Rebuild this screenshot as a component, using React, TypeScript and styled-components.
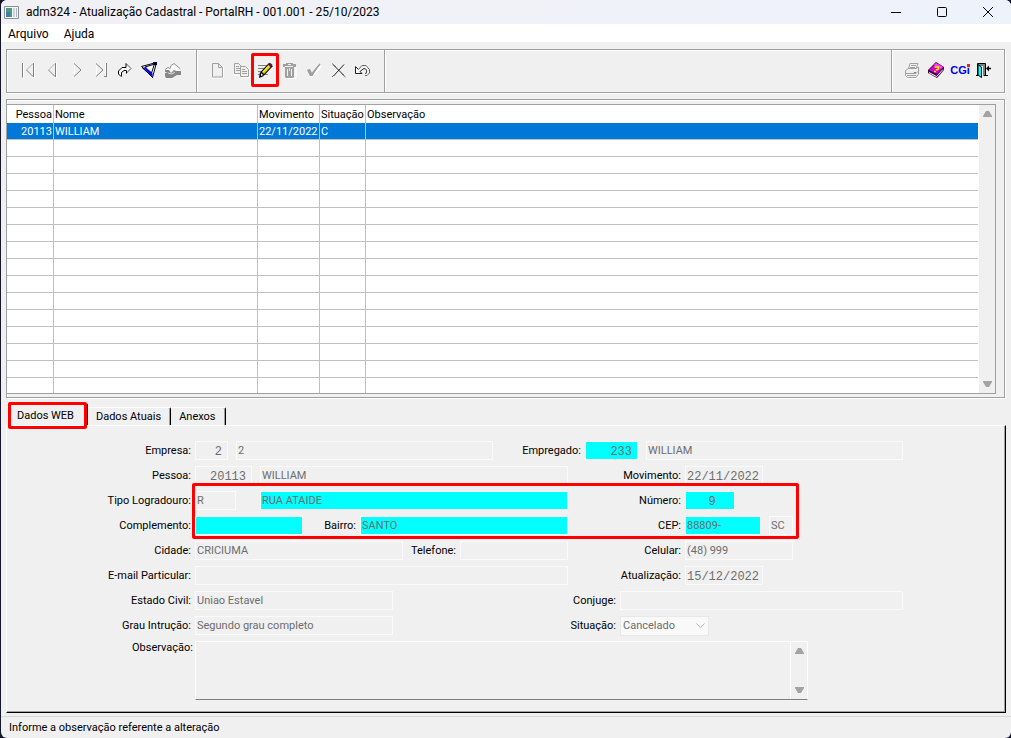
import React from 'react';
import styled, { createGlobalStyle, css } from 'styled-components';

const ui = 'Roboto, "Liberation Sans", sans-serif';
const system = 'Roboto, "Open Sans", sans-serif';
const mono = '"Liberation Mono", monospace';

const GlobalStyle = createGlobalStyle`
  *, *::before, *::after { box-sizing: border-box; }
  body { margin: 0; background: #16162a; }
  input, select, textarea, button { font: inherit; color: inherit; margin: 0; }
`;

const Window = styled.div`
  display: flex;
  flex-direction: column;
  min-height: 100vh;
  margin-left: 1px;
  border-radius: 6px;
  overflow: hidden;
  background: #f0f0f0;
  color: #000;
  font: 11px/16px ${ui};
`;

const TitleBar = styled.header`
  display: flex;
  align-items: center;
  height: 24px;
  padding-left: 3px;
  background: linear-gradient(90deg, #f1f1f4, #eef2fb);
  font: 12px/16px ${system};
`;

const Title = styled.h1`
  flex: 1;
  margin: 0 0 0 7px;
  font: inherit;
`;

const WindowButton = styled.button`
  display: grid;
  place-items: center;
  width: 46px;
  height: 24px;
  padding: 0;
  border: 0;
  background: none;
`;

const MenuBar = styled.nav`
  display: flex;
  gap: 15px;
  height: 18px;
  padding-left: 7px;
  background: #fff;
  font: 12px/20px ${system};
`;

const MenuLink = styled.a`
  color: #000;
  text-decoration: none;
`;

const groove = css`
  border: 1px solid #a0a0a0;
  box-shadow: inset 1px 1px #fff, 1px 1px #fff;
`;

const Toolbar = styled.div`
  display: flex;
  height: 44px;
  margin: 7px 6px 0 5px;
  ${groove}
`;

const ToolGroup = styled.div<{ $grow?: boolean; $w?: number }>`
  display: flex;
  align-items: center;
  width: ${(p) => (p.$w ? `${p.$w}px` : 'auto')};
  flex: ${(p) => (p.$grow ? '1' : 'none')};
  padding: 0 0 2px 9px;
  & + & {
    padding-left: 8px;
    border-left: 1px solid #a0a0a0;
    box-shadow: inset 1px 1px #fff;
  }
`;

const ToolButton = styled.button<{ $marked?: boolean }>`
  position: relative;
  display: grid;
  place-items: center;
  width: 24px;
  height: 24px;
  padding: 0;
  border: 0;
  background: none;
  svg { display: block; }
  ${(p) => p.$marked && css`
    &::after {
      content: '';
      position: absolute;
      inset: -5px -2px;
      border: 3px solid #f00;
      border-radius: 2px;
    }
  `}
`;

const CgiMark = styled.span`
  position: relative;
  color: #0000f0;
  font: bold 11px/16px "Liberation Sans", sans-serif;
  &::after {
    content: '';
    position: absolute;
    top: 2px;
    right: 0;
    width: 3px;
    height: 3px;
    background: #f02020;
  }
`;

const ListFrame = styled.section`
  margin: 6px 6px 0 5px;
  padding: 4px 8px 3px 0;
  ${groove}
`;

const ListBox = styled.div`
  display: flex;
  border: solid #a0a0a0;
  border-width: 1px 1px 1px 0;
  background: #fff;
`;

const Table = styled.table`
  flex: 1;
  table-layout: fixed;
  border-collapse: separate;
  border-spacing: 0;
`;

const Col = styled.col<{ $w?: number }>`
  width: ${(p) => (p.$w ? `${p.$w}px` : 'auto')};
`;

const Cell = styled.td<{ $right?: boolean }>`
  height: 17px;
  padding: 0 1px;
  border-right: 1px solid #c0c0c0;
  border-bottom: 1px solid #c0c0c0;
  line-height: 15px;
  text-align: ${(p) => (p.$right ? 'right' : 'left')};
  white-space: nowrap;
  &:last-child { border-right: 0; }
`;

const HeadCell = styled(Cell)`
  height: 18px;
  padding-top: 2px;
  font-weight: normal;
  line-height: 16px;
  border-bottom: 0;
`;

const Row = styled.tr<{ $selected?: boolean }>`
  background: ${(p) => (p.$selected ? '#0078d7' : '#fff')};
  color: ${(p) => (p.$selected ? '#fff' : '#000')};
  tbody > &:last-child > td { border-bottom: 0; height: 15px; }
`;

const ScrollTrack = styled.div`
  display: flex;
  flex-direction: column;
  justify-content: space-between;
  align-items: center;
  width: 17px;
  padding: 6px 0;
  background: #f0f0f0;
  border-left: 1px solid #fff;
`;

const Tabs = styled.div`
  display: flex;
  align-items: flex-end;
  height: 27px;
  margin: 0 5px;
`;

const Tab = styled.button<{ $active?: boolean }>`
  position: relative;
  height: ${(p) => (p.$active ? 22 : 18)}px;
  padding: 1px 9px 0 8px;
  border: 0;
  border-top: 1px solid #fff;
  border-right: 1px solid #000;
  border-radius: 0 2px 0 0;
  box-shadow: inset -1px 0 #a0a0a0;
  background: #f0f0f0;
  line-height: 16px;
  ${(p) => p.$active && css`
    padding: 2px 13px 0 11px;
    &::after {
      content: '';
      position: absolute;
      inset: -2px 0 -4px 2px;
      border: 3px solid #f00;
      border-radius: 2px;
    }
  `}
`;

const Panel = styled.form`
  flex: 1;
  margin: 0 5px;
  padding-top: 15px;
  border: 1px solid;
  border-color: #fff #000 #000 #fff;
  box-shadow: inset -1px -1px #a0a0a0;
`;

const FormRow = styled.div`
  display: flex;
  align-items: center;
  height: 19px;
  margin-bottom: 6px;
`;

const Marked = styled.div`
  position: relative;
  &::after {
    content: '';
    position: absolute;
    top: -8px;
    left: 185px;
    width: 607px;
    height: 56px;
    border: 3px solid #f00;
    border-radius: 2px;
    pointer-events: none;
  }
`;

const Label = styled.label<{ $w: number }>`
  flex: none;
  width: ${(p) => p.$w}px;
  margin-right: 4px;
  padding-top: 1px;
  text-align: right;
  white-space: nowrap;
`;

const Slot = styled.div<{ $w: number }>`
  display: flex;
  flex: none;
  width: ${(p) => p.$w}px;
  margin-right: 8px;
`;

const Field = styled.input<{ $w: number; $changed?: boolean; $mono?: boolean; $right?: boolean }>`
  flex: none;
  width: ${(p) => p.$w}px;
  height: 19px;
  padding: ${(p) => (p.$mono ? '2px' : '0')} ${(p) => (p.$right ? 5 : 1)}px 0 1px;
  border: 1px solid #fafafa;
  border-radius: 0;
  outline: 0;
  background: ${(p) => (p.$changed ? '#0ff' : '#f0f0f0')};
  color: #6d6d6d;
  text-align: ${(p) => (p.$right ? 'right' : 'left')};
  && { font: ${(p) => (p.$mono ? `12px/15px ${mono}` : `11px/15px ${ui}`)}; }
  input + & { margin-left: 8px; }
`;

const SelectBox = styled.div`
  position: relative;
  width: 89px;
  height: 20px;
  svg { position: absolute; right: 4px; top: 7px; pointer-events: none; }
`;

const Select = styled.select`
  appearance: none;
  width: 100%;
  height: 20px;
  padding: 0 2px;
  border: 1px solid #e8e8e8;
  border-radius: 0;
  background: #f9f9f9;
  && { color: #6d6d6d; }
`;

const Notes = styled.div`
  display: flex;
  align-items: flex-start;
  ${Label} { width: 186px; margin-right: 2px; line-height: 12px; }
`;

const NotesBox = styled.div`
  display: flex;
  width: 613px;
  height: 59px;
  border: 1px solid #fff;
  border-bottom-color: #808080;
`;

const NotesText = styled.textarea`
  flex: 1;
  padding: 1px 2px;
  border: 0;
  outline: 0;
  resize: none;
  overflow: hidden;
  background: #f0f0f0;
`;

const StatusBar = styled.footer`
  height: 22px;
  margin-top: 3px;
  padding: 3px 8px;
  border-top: 1px solid #d7d7d7;
`;

const Arrow = ({ down }: { down?: boolean }) => (
  <svg width="9" height="6" viewBox="0 0 9 6" aria-hidden="true">
    <path d={down ? 'M0 0h9v1L6 6H3L0 1z' : 'M0 6h9V5L6 0H3L0 5z'} fill="#a3a3a3" />
  </svg>
);

const Icon = ({ children }: { children: React.ReactNode }) => (
  <svg width="18" height="18" viewBox="0 0 18 18" fill="none" aria-hidden="true">{children}</svg>
);

const icons = {
  first: (
    <Icon>
      <path d="M4.5 17V2.500H3" stroke="#fff" />
      <path d="M3.500 2v14.500M14.500 2v14M14 15.500 7.500 9" stroke="#808080" />
      <path d="M15.500 2v15" stroke="#fff" />
      <path d="m7.500 9 6.500-6.500" stroke="#b0b0b0" />
    </Icon>
  ),
  prev: (
    <Icon>
      <path d="M12.500 2v14M12 15.500 5.500 9" stroke="#808080" />
      <path d="M13.500 2v15" stroke="#fff" />
      <path d="m5.500 9 6.500-6.500" stroke="#b0b0b0" />
    </Icon>
  ),
  next: (
    <Icon>
      <path d="M7.500 3v13" stroke="#fff" />
      <path d="m7 2.500 7 6.500-7 6.500" stroke="#808080" />
    </Icon>
  ),
  last: (
    <Icon>
      <path d="M5.500 3v13M14.500 2v13" stroke="#fff" />
      <path d="m5 2.500 7 6.500-7 6.500M15.500 2v14M13 15.500h3" stroke="#808080" />
    </Icon>
  ),
  redo: (
    <Icon>
      <path d="M6.500 15.500H5L3.500 14v-4L7 6.500h4v-4l5 5-5 5v-3H8.500L6.500 11v3z" fill="#f8f8f8" />
      <path d="m11 2.500 5 5-4.500 4.500" stroke="#555" />
      <path d="M6 15.500 3.500 13v-3L7 6.500h4v-4M11.500 12.500V9.500H9L6.500 11.500v4" stroke="#000" />
    </Icon>
  ),
  filter: (
    <Icon>
      <path d="M2.500 5.500 17.500 1.500 13.500 16.500z" fill="#fff" stroke="#000" />
      <path d="M4 6.500 8 6l5.500 6v4z" fill="#00f" />
      <path d="m7 6.500 7-2.500-.500 8z" fill="#fff" />
      <path d="m3 6.500 10.500 9.500M6 6 16 3M15.500 3l-3 9" stroke="#000" />
      <path d="M14 1h4v3h-3z" fill="#000050" />
    </Icon>
  ),
  folder: (
    <Icon>
      <path d="m2 9 8-7 8 5v6H2z" fill="#f8f8f8" />
      <path d="m2 8.500 3-2 2 1 1-3 3-2 6.500 5.500" stroke="#909090" />
      <path d="M2 9h4l2 3 3-3 2 1h5v4h-4l-5 3H3l-1-2v-3l3-1H2z" fill="#868686" />
      <path d="m5 12 4 1 3-2" stroke="#e0e0e0" />
    </Icon>
  ),
  page: (
    <Icon>
      <path d="M4.500 17h11V6" stroke="#fff" />
      <path d="M4.500 2.500h6l4 4v9.500H4.500zM10.500 2.500v4H14" stroke="#a0a0a0" />
    </Icon>
  ),
  copy: (
    <Icon>
      <path d="M2 14h7M9 16.500h8.500V8" stroke="#fff" />
      <path d="M2.500 2.500h4l3 3v7h-7zM4 5.500h3M4 7.500h5M4 9.500h5" stroke="#a0a0a0" />
      <path d="M8.500 5.500h5l3 3v7h-8z" fill="#f0f0f0" stroke="#a0a0a0" />
      <path d="M10 8.500h3M10 10.500h5M10 12.500h5" stroke="#a0a0a0" />
    </Icon>
  ),
  pencil: (
    <Icon>
      <path d="M2 4.500h9M2 7.500h8M2 10.500h5M2 13.500h10" stroke="#808080" />
      <path d="m6 13 9-9.500" stroke="#000" strokeWidth="5" />
      <path d="m4 11 4 4-5 2z" fill="#000" />
      <path d="m7 12 7-7.500" stroke="#e0c800" strokeWidth="3" />
      <path d="m7 11 6-6.500" stroke="#ffff60" />
      <path d="m13.500 5 2-2" stroke="#700070" strokeWidth="3" />
      <path d="m5 12.500 2 1.500-2 1z" fill="#fff" />
    </Icon>
  ),
  trash: (
    <Icon>
      <path d="M6 17.500h10V6" stroke="#fff" />
      <path d="M3 3h3V2h7v1h3v3h-2v10l-1 1H6l-1-1V6H3z" fill="#a0a0a0" />
      <path d="M8 3.500h3M5 5.500h8M7.500 8v7M11.500 8v7" stroke="#f0f0f0" />
      <path d="M9.500 7v3" stroke="#e0e0e0" />
    </Icon>
  ),
  check: (
    <Icon>
      <path d="m6 12 2 4 9-11" stroke="#fff" strokeWidth="2" />
      <path d="m3 9 3-1 2 4 8-9.500L8.500 15H6z" fill="#a0a0a0" />
      <path d="m4 9 3 5 9-11" stroke="#a0a0a0" strokeWidth="1.500" />
    </Icon>
  ),
  cancel: (
    <Icon>
      <path d="m5.500 4 10 10M16 3.500 5.500 15" stroke="#202020" />
      <path d="m4 2.500 4 3.500M14 13l3.500 3M6 14l-2 2" stroke="#606060" />
    </Icon>
  ),
  undo: (
    <Icon>
      <path d="M3.500 5.500v8h7L8.500 11l3-2.500c2-1 4 1 3 4l-1.500 2h3l2-2.500V8l-3-3H10L6 8.500z" fill="#f6f6f6" />
      <path d="M3.500 5.500v7h6.500L8 10.500l3-2.500c3-1.500 5 2 2.500 5M3.500 5.500l3 3" stroke="#202020" />
      <path d="M6.500 8.500 10 4.500h4l3.500 4V12L15 14.500H13" stroke="#606060" />
    </Icon>
  ),
  printer: (
    <Icon>
      <path d="M4 17.500h10l2.500-3" stroke="#fff" />
      <path d="M5.500 7.500 7 2.500h8l-2 5M2.500 9.500l3-2h7.500l2.500-1.500v7L13 16.500H4.500l-2-2zM2.500 12.500H13l3-3M8 4.500h5M7 6.500h5M4 14.500h9" stroke="#a0a0a0" />
      <path d="M11 11h2v1h-2z" fill="#808080" />
    </Icon>
  ),
  book: (
    <Icon>
      <path d="M1 9 9 1l8 5v3l-7 8-9-5z" fill="#400040" />
      <path d="M2 9 9 2l7 4-6 7z" fill="#d000d0" />
      <path d="M2 11.500 9.500 15.500 16 8.500" stroke="#fff" />
      <path d="m9 2 7 4-2 2-7-4z" fill="#ff40ff" />
      <path d="M7.500 6h4v2L9 9M7 10.500h2" stroke="#ffe800" strokeWidth="1.500" />
    </Icon>
  ),
  exit: (
    <Icon>
      <path d="M4 3h6v12H8V5H4z" fill="#808080" />
      <path d="M2.500 15V2.500h8V15M1 14.500h2M9 14.500h4" stroke="#000" />
      <path d="M3 3.500 6.500 6v10.500L3 14z" fill="#0ff" stroke="#000" />
      <path d="M12 7.500h4" stroke="#000" strokeWidth="1.500" />
      <path d="m11 7.500 3-3v6z" fill="#000" />
    </Icon>
  ),
};

type Tool = [keyof typeof icons, string];
const navigation: Tool[] = [
  ['first', 'Primeiro'], ['prev', 'Anterior'], ['next', 'Próximo'], ['last', 'Último'],
  ['redo', 'Ir para'], ['filter', 'Filtro'], ['folder', 'Abrir'],
];
const editing: Tool[] = [
  ['page', 'Novo'], ['copy', 'Copiar'], ['pencil', 'Alterar'], ['trash', 'Excluir'],
  ['check', 'Confirmar'], ['cancel', 'Cancelar'], ['undo', 'Desfazer'],
];

const Tools = ({ items }: { items: Tool[] }) => (
  <>
    {items.map(([name, label]) => (
      <ToolButton key={name} type="button" aria-label={label} $marked={name === 'pencil'}>
        {icons[name]}
      </ToolButton>
    ))}
  </>
);

const blankRows = Array.from({ length: 15 }, (_, i) => i);

export default function App() {
  return (
    <>
      <GlobalStyle />
      <Window>
        <TitleBar>
          <svg width="15" height="13" viewBox="0 0 15 13" aria-hidden="true">
            <path d="M.5.5h14v12H.500z" fill="#f4f6f8" stroke="#8a8f96" />
            <path d="M2 2h6v9H2z" fill="#4a9a80" />
            <path d="M2 6h4v5H2z" fill="#4a78a8" />
            <path d="M9 2h2v9H9z" fill="#c8d4dc" />
            <path d="M12 2h1v9h-1z" fill="#a8b8c4" />
          </svg>
          <Title>adm324 - Atualização Cadastral - PortalRH - 001.001 - 25/10/2023</Title>
          <WindowButton type="button" aria-label="Minimizar">
            <svg width="10" height="10"><path d="M0 5.500h10" stroke="#000" /></svg>
          </WindowButton>
          <WindowButton type="button" aria-label="Maximizar">
            <svg width="10" height="10"><rect x=".5" y=".5" width="9" height="9" rx="1" fill="none" stroke="#000" /></svg>
          </WindowButton>
          <WindowButton type="button" aria-label="Fechar">
            <svg width="10" height="10"><path d="m0 0 10 10M10 0 0 10" stroke="#000" /></svg>
          </WindowButton>
        </TitleBar>
        <MenuBar>
          <MenuLink href="#arquivo">Arquivo</MenuLink>
          <MenuLink href="#ajuda">Ajuda</MenuLink>
        </MenuBar>

        <Toolbar>
          <ToolGroup $w={189}><Tools items={navigation} /></ToolGroup>
          <ToolGroup $w={188}><Tools items={editing} /></ToolGroup>
          <ToolGroup $grow />
          <ToolGroup $w={113}>
            <ToolButton type="button" aria-label="Imprimir">{icons.printer}</ToolButton>
            <ToolButton type="button" aria-label="Manual">{icons.book}</ToolButton>
            <ToolButton type="button"><CgiMark>CGi</CgiMark></ToolButton>
            <ToolButton type="button" aria-label="Sair">{icons.exit}</ToolButton>
          </ToolGroup>
        </Toolbar>

        <ListFrame>
          <ListBox>
            <Table>
              <colgroup>
                <Col $w={47} /><Col $w={204} /><Col $w={62} /><Col $w={46} /><Col />
              </colgroup>
              <thead>
                <Row>
                  <HeadCell as="th" $right>Pessoa</HeadCell>
                  <HeadCell as="th">Nome</HeadCell>
                  <HeadCell as="th">Movimento</HeadCell>
                  <HeadCell as="th">Situação</HeadCell>
                  <HeadCell as="th">Observação</HeadCell>
                </Row>
              </thead>
              <tbody>
                <Row $selected>
                  <Cell $right>20113</Cell>
                  <Cell>WILLIAM</Cell>
                  <Cell>22/11/2022</Cell>
                  <Cell>C</Cell>
                  <Cell />
                </Row>
                {blankRows.map((i) => (
                  <Row key={i}><Cell /><Cell /><Cell /><Cell /><Cell /></Row>
                ))}
              </tbody>
            </Table>
            <ScrollTrack><Arrow /><Arrow down /></ScrollTrack>
          </ListBox>
        </ListFrame>

        <Tabs role="tablist">
          <Tab type="button" role="tab" aria-selected $active>Dados WEB</Tab>
          <Tab type="button" role="tab">Dados Atuais</Tab>
          <Tab type="button" role="tab">Anexos</Tab>
        </Tabs>

        <Panel>
          <FormRow>
            <Label $w={184} htmlFor="empresa">Empresa:</Label>
            <Field id="empresa" $w={33} $mono $right readOnly defaultValue="2" />
            <Field aria-label="Nome da empresa" $w={257} readOnly defaultValue="2" />
            <Label $w={88} htmlFor="empregado">Empregado:</Label>
            <Field id="empregado" $w={53} $changed $mono $right readOnly defaultValue="233" />
            <Field aria-label="Nome do empregado" $w={257} readOnly defaultValue="WILLIAM" />
          </FormRow>
          <FormRow>
            <Label $w={184} htmlFor="pessoa">Pessoa:</Label>
            <Field id="pessoa" $w={57} $mono $right readOnly defaultValue="20113" />
            <Field aria-label="Nome da pessoa" $w={308} readOnly defaultValue="WILLIAM" />
            <Label $w={113} htmlFor="movimento">Movimento:</Label>
            <Field id="movimento" $w={78} $mono readOnly defaultValue="22/11/2022" />
          </FormRow>
          <Marked>
            <FormRow>
              <Label $w={184} htmlFor="tipo">Tipo Logradouro:</Label>
              <Slot $w={57}><Field id="tipo" $w={41} readOnly defaultValue="R" /></Slot>
              <Field aria-label="Logradouro" $w={308} $changed readOnly defaultValue="RUA ATAIDE" />
              <Label $w={113} htmlFor="numero">Número:</Label>
              <Field id="numero" $w={50} $changed $mono readOnly defaultValue="   9" />
            </FormRow>
            <FormRow>
              <Label $w={184} htmlFor="complemento">Complemento:</Label>
              <Field id="complemento" $w={108} $changed readOnly defaultValue="" />
              <Label $w={53} htmlFor="bairro">Bairro:</Label>
              <Field id="bairro" $w={208} $changed readOnly defaultValue="SANTO" />
              <Label $w={113} htmlFor="cep">CEP:</Label>
              <Field id="cep" $w={76} $changed readOnly defaultValue="88809-" />
              <Field aria-label="UF" $w={24} readOnly defaultValue="SC" />
            </FormRow>
          </Marked>
          <FormRow>
            <Label $w={184} htmlFor="cidade">Cidade:</Label>
            <Field id="cidade" $w={208} readOnly defaultValue="CRICIUMA" />
            <Label $w={53} htmlFor="telefone">Telefone:</Label>
            <Field id="telefone" $w={108} readOnly defaultValue="" />
            <Label $w={113} htmlFor="celular">Celular:</Label>
            <Field id="celular" $w={108} readOnly defaultValue="(48) 999" />
          </FormRow>
          <FormRow>
            <Label $w={184} htmlFor="email">E-mail Particular:</Label>
            <Field id="email" $w={373} readOnly defaultValue="" />
            <Label $w={113} htmlFor="atualizacao">Atualização:</Label>
            <Field id="atualizacao" $w={78} $mono readOnly defaultValue="15/12/2022" />
          </FormRow>
          <FormRow>
            <Label $w={184} htmlFor="civil">Estado Civil:</Label>
            <Field id="civil" $w={198} readOnly defaultValue="Uniao Estavel" />
            <Label $w={223} htmlFor="conjuge">Conjuge:</Label>
            <Field id="conjuge" $w={283} readOnly defaultValue="" />
          </FormRow>
          <FormRow>
            <Label $w={184} htmlFor="grau">Grau Intrução:</Label>
            <Field id="grau" $w={198} readOnly defaultValue="Segundo grau completo" />
            <Label $w={223} htmlFor="situacao">Situação:</Label>
            <SelectBox>
              <Select id="situacao"><option>Cancelado</option></Select>
              <svg width="9" height="6" aria-hidden="true"><path d="m.5.5 4 4 4-4" fill="none" stroke="#b0b0b0" /></svg>
            </SelectBox>
          </FormRow>
          <Notes>
            <Label $w={184} htmlFor="obs">Observação:</Label>
            <NotesBox>
              <NotesText id="obs" readOnly />
              <ScrollTrack><Arrow /><Arrow down /></ScrollTrack>
            </NotesBox>
          </Notes>
        </Panel>

        <StatusBar>Informe a observação referente a alteração</StatusBar>
      </Window>
    </>
  );
}
